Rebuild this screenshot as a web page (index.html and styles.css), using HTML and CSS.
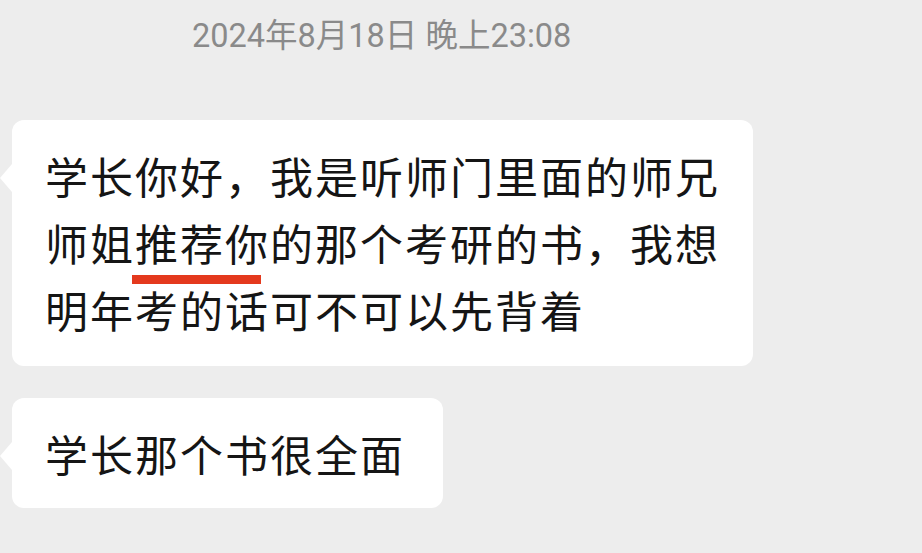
FILE: index.html
```html
<!DOCTYPE html>
<html lang="zh-CN">
<head>
    <meta charset="UTF-8">
    <meta name="viewport" content="width=device-width, initial-scale=1.0">
    <title>聊天记录</title>
    <link rel="stylesheet" href="styles.css">
</head>
<body>
    <div class="chat">
        <div class="time">2024年8月18日 晚上23:08</div>

        <!-- Incoming messages -->
        <div class="msg">
            <div class="bubble">
                学长你好，我是听师门里面的师兄<br>
                师姐<span class="mark">推荐你</span>的那个考研的书，我想<br>
                明年考的话可不可以先背着
            </div>
        </div>

        <div class="msg">
            <div class="bubble short">学长那个书很全面</div>
        </div>
    </div>
</body>
</html>
```

FILE: styles.css
```css
body {
    margin: 0;
    padding: 0;
    background-color: #ededed;
    font-family: "Noto Sans CJK SC", "Noto Sans", sans-serif;
    height: 553px;
    overflow: hidden;
}

.chat {
    display: flex;
    flex-direction: column;
    align-items: flex-start;
    padding: 0 0 0 12px;
}

.time {
    margin: 14px 0 0 180px;
    font-family: Roboto, "Noto Sans CJK SC", sans-serif;
    font-size: 32.5px;
    line-height: 44px;
    color: #8a8a8a;
}

.msg {
    margin-top: 62px;
}

.msg + .msg {
    margin-top: 32px;
}

.bubble {
    position: relative;
    background-color: #fff;
    border-radius: 12px;
    padding: 22px 33px 23px 33px;
    font-size: 43px;
    line-height: 67px;
    letter-spacing: 2px;
    color: #151515;
}

.bubble.short {
    padding: 22px 38px 21px 33px;
}

/* little tail on the left */
.bubble::before {
    content: "";
    position: absolute;
    left: -12px;
    top: 44px;
    border-style: solid;
    border-width: 14px 12px 14px 0;
    border-color: transparent #fff transparent transparent;
}

/* red hand-drawn underline */
.mark {
    position: relative;
}

.mark::after {
    content: "";
    position: absolute;
    left: -3px;
    right: 9px;
    bottom: -11px;
    height: 9px;
    background-color: #e4391d;
}
```
